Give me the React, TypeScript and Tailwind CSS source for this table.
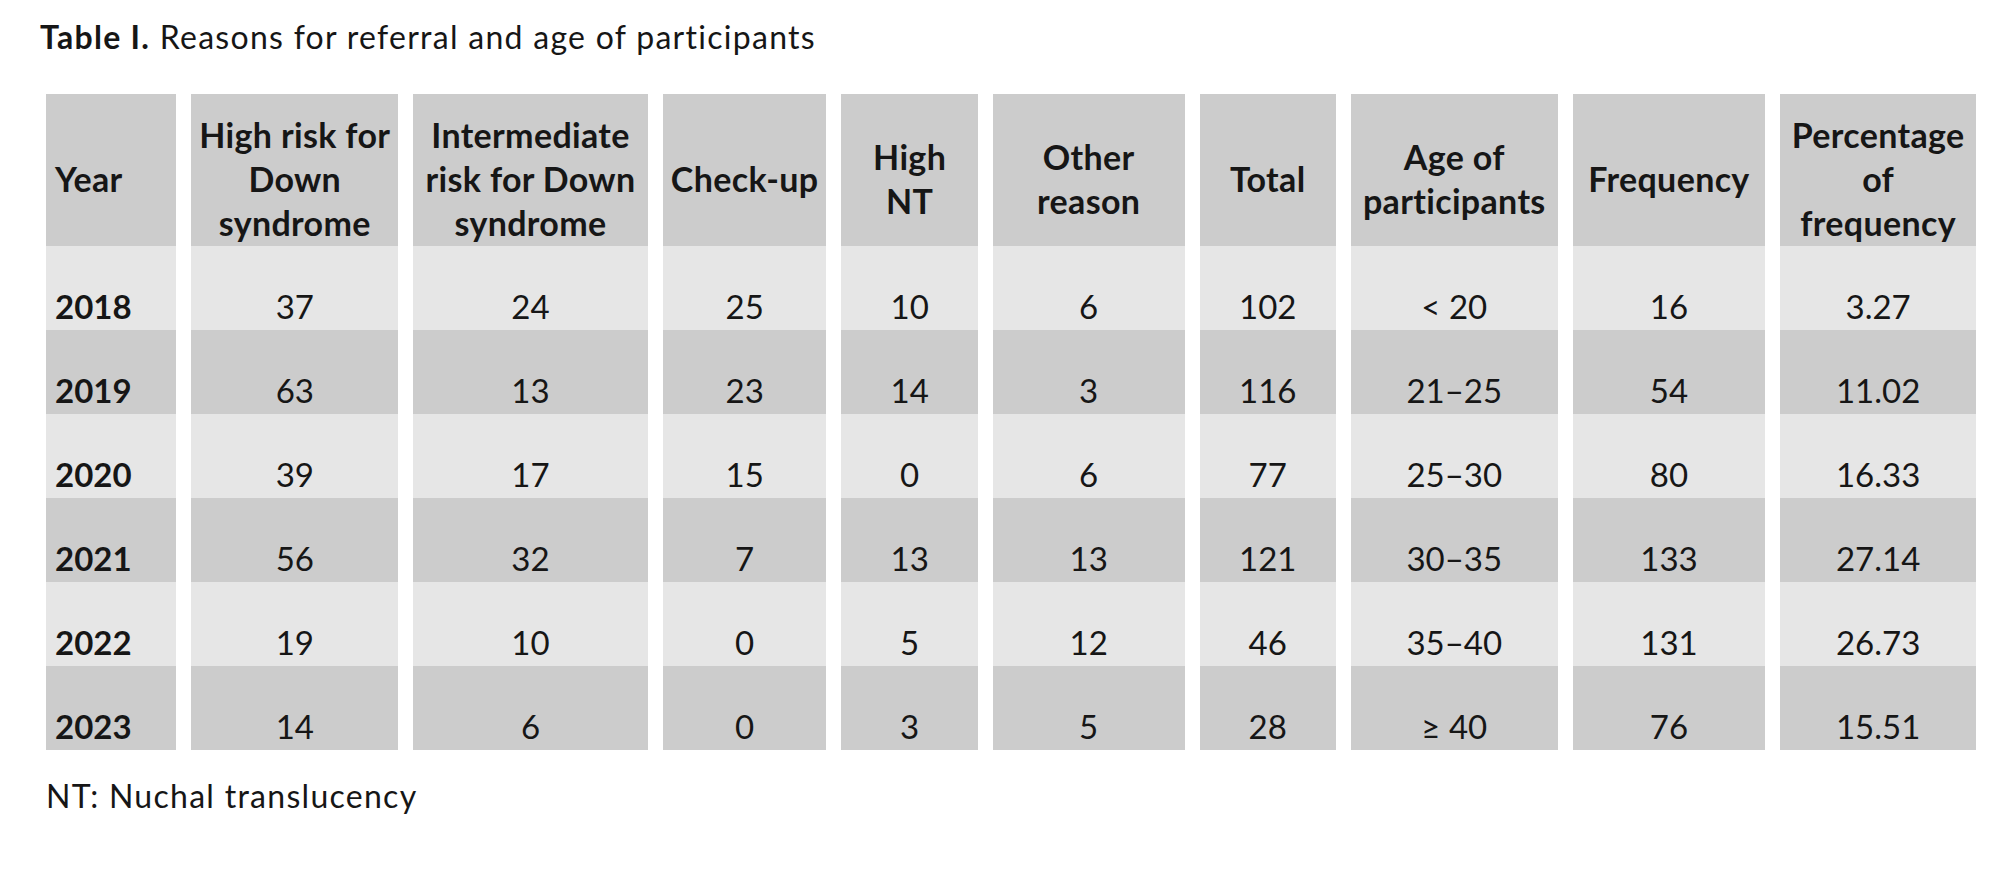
const columns = [
  { width: 'w-[130px]', lines: ['Year'], left: true },
  { width: 'w-[206px]', lines: ['High risk for', 'Down', 'syndrome'] },
  { width: 'w-[234px]', lines: ['Intermediate', 'risk for Down', 'syndrome'] },
  { width: 'w-[163px]', lines: ['Check-up'] },
  { width: 'w-[136px]', lines: ['High', 'NT'] },
  { width: 'w-[191px]', lines: ['Other', 'reason'] },
  { width: 'w-[136px]', lines: ['Total'] },
  { width: 'w-[206px]', lines: ['Age of', 'participants'] },
  { width: 'w-[192px]', lines: ['Frequency'] },
  { width: 'w-[195px]', lines: ['Percentage', 'of', 'frequency'] },
]

const rows = [
  ['2018', '37', '24', '25', '10', '6', '102', '< 20', '16', '3.27'],
  ['2019', '63', '13', '23', '14', '3', '116', '21–25', '54', '11.02'],
  ['2020', '39', '17', '15', '0', '6', '77', '25–30', '80', '16.33'],
  ['2021', '56', '32', '7', '13', '13', '121', '30–35', '133', '27.14'],
  ['2022', '19', '10', '0', '5', '12', '46', '35–40', '131', '26.73'],
  ['2023', '14', '6', '0', '3', '5', '28', '≥ 40', '76', '15.51'],
]

export default function App() {
  return (
    <div
      className="w-[2000px] h-[869px] bg-white text-[#161616] pt-[18px]"
      style={{ fontFamily: 'Lato, "Open Sans", sans-serif' }}
    >
      {/* Caption */}
      <p className="pl-[40px] text-[32px] leading-[38px] tracking-[0.04em]">
        <span className="font-bold">Table I.</span> Reasons for referral and age of participants
      </p>

      <table className="mt-[38px] ml-[31px] w-[1960px] table-fixed border-separate border-spacing-x-[15.5px] border-spacing-y-0">
        <colgroup>
          {columns.map((col, i) => (
            <col key={i} className={col.width} />
          ))}
        </colgroup>
        <thead>
          <tr className="h-[152px]">
            {columns.map((col, i) => (
              <th
                key={i}
                className={`bg-[#cccccc] align-middle pt-[18px] font-bold text-[34px] leading-[44px] tracking-[0.01em] ${
                  col.left ? 'text-left pl-[9px]' : 'text-center px-1'
                }`}
              >
                {col.lines.map((line, j) => (
                  <span key={j} className="block whitespace-nowrap">
                    {line}
                  </span>
                ))}
              </th>
            ))}
          </tr>
        </thead>
        <tbody>
          {rows.map((row, r) => (
            <tr key={row[0]} className="h-[84px]">
              {row.map((cell, c) => (
                <td
                  key={c}
                  className={`${r % 2 === 0 ? 'bg-[#e6e6e6]' : 'bg-[#cccccc]'} align-bottom pb-[4px] text-[33px] leading-[40px] ${
                    c === 0 ? 'text-left pl-[9px] font-bold' : 'text-center px-1'
                  }`}
                >
                  {cell}
                </td>
              ))}
            </tr>
          ))}
        </tbody>
      </table>

      <p className="mt-[27px] pl-[46px] text-[32px] leading-[1.2] tracking-[0.04em]">NT: Nuchal translucency</p>
    </div>
  )
}
